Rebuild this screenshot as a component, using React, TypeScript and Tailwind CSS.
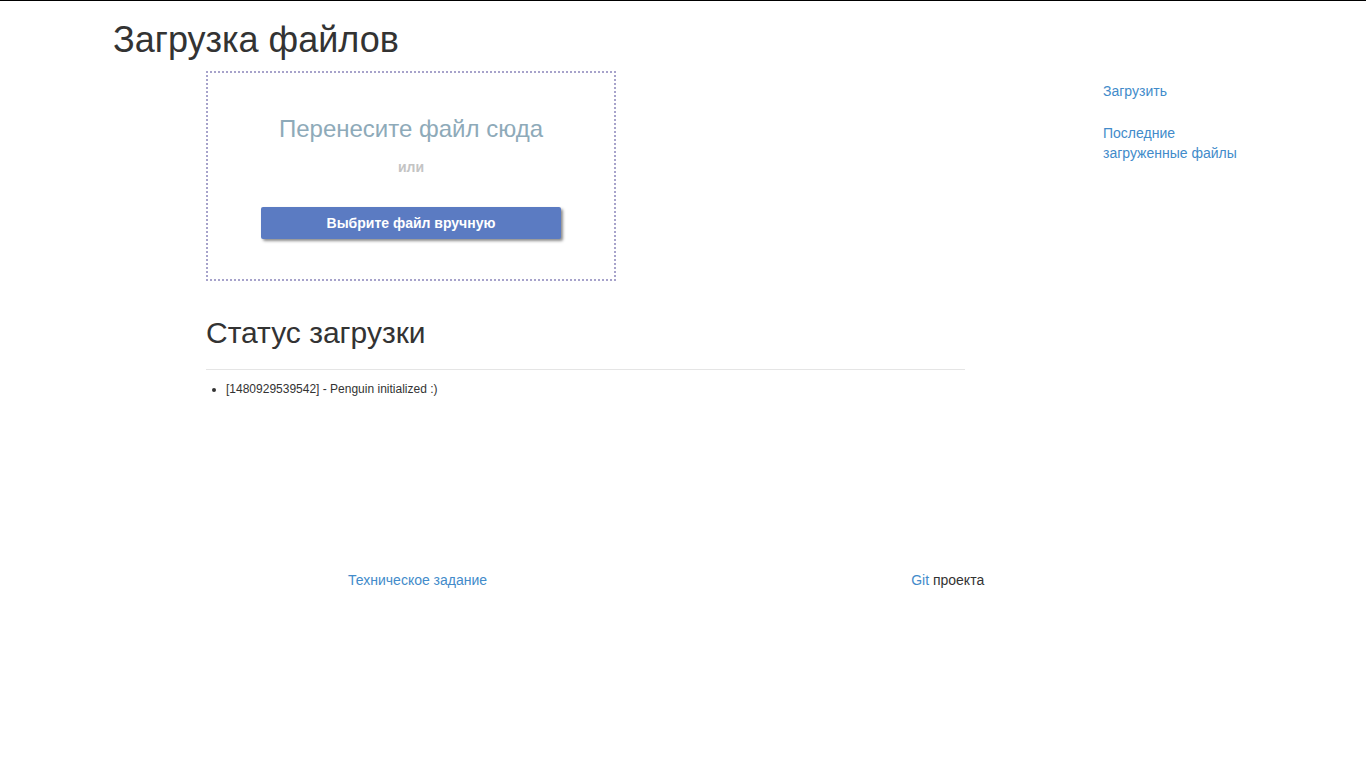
export default function App() {
  return (
    <div className="min-h-[768px] bg-white border-t border-black font-['Liberation_Sans',Arial,sans-serif] text-[#333]">
      <div className="pl-[113px]">
        <h1 className="pt-[19px] text-[36px] leading-[40px] text-[#333]">Загрузка файлов</h1>
      </div>

      <div className="flex">
        {/* MAIN COLUMN */}
        <div className="ml-[206px] w-[759px]">
          <div className="mt-[11px] w-[410px] h-[210px] border-2 border-dotted border-[#a7a3cb] flex flex-col items-center">
            <p className="mt-[42px] text-[24px] leading-[28px] text-[#8eaab9]">Перенесите файл сюда</p>
            <p className="mt-[14px] text-[14px] leading-[20px] font-bold text-[#c4c4c4]">или</p>
            <button className="mt-[30px] w-[300px] h-[32px] rounded-[2px] bg-[#5b7bc2] text-white text-[14px] font-bold shadow-[2px_2px_3px_rgba(0,0,0,0.45)]">
              Выбрите файл вручную
            </button>
          </div>

          <h2 className="mt-[35px] text-[30px] leading-[33px] text-[#333]">Статус загрузки</h2>
          <div className="mt-[20px] border-t border-[#e5e5e5]" />
          <ul className="mt-[11px] list-disc pl-[20px] text-[12px] leading-[17px] text-[#333]">
            <li>[1480929539542] - Penguin initialized :)</li>
          </ul>
        </div>

        {/* SIDEBAR */}
        <div className="ml-[138px] pt-[21px] flex flex-col gap-[22px] text-[14px] leading-[20px] text-[#428bca] w-[150px]">
          <a>Загрузить</a>
          <a>Последние загруженные файлы</a>
        </div>
      </div>

      {/* FOOTER */}
      <div className="mt-[172px] flex text-[14px] leading-[20px]">
        <a className="ml-[348px] text-[#428bca]">Техническое задание</a>
        <span className="ml-[424px]">
          <a className="text-[#428bca]">Git</a> проекта
        </span>
      </div>
    </div>
  );
}
